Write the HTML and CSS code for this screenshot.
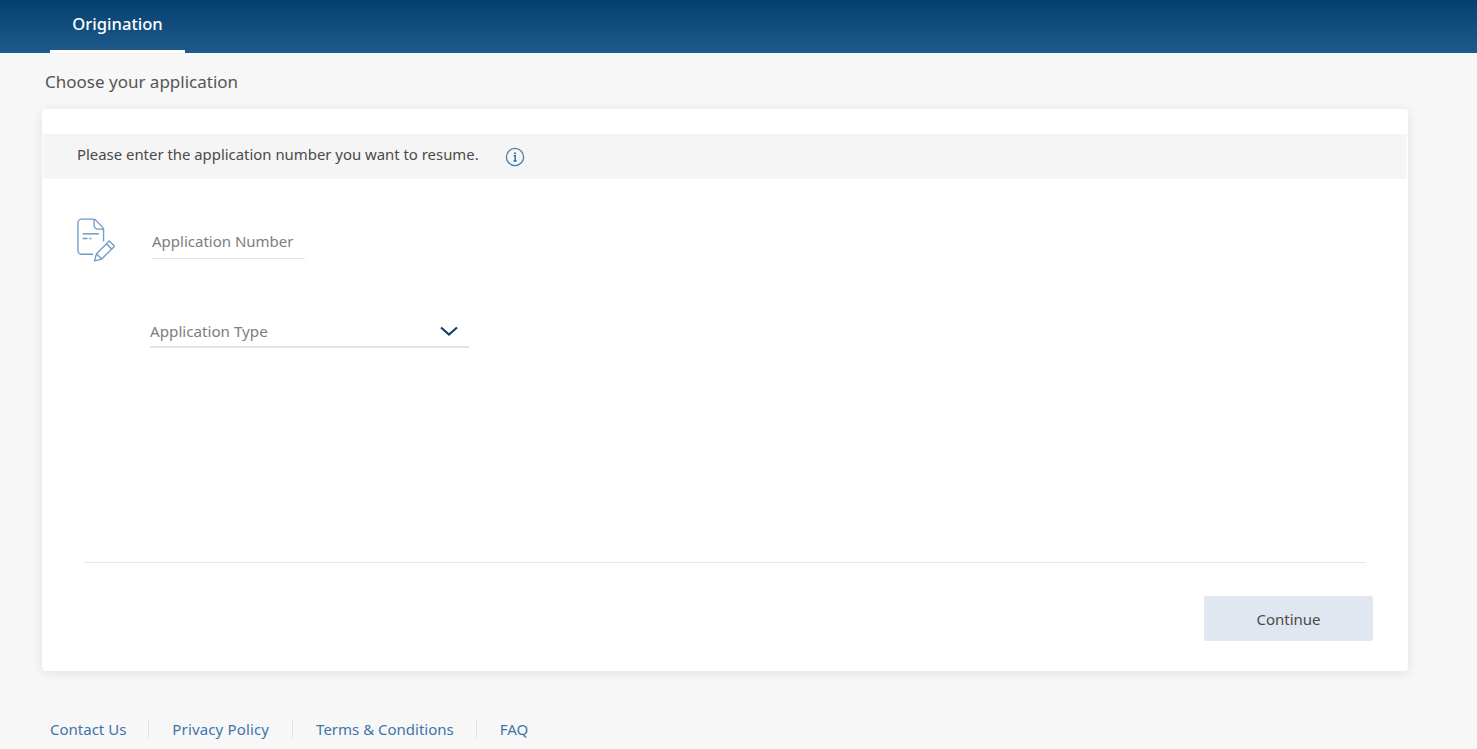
FILE: index.html
```html
<!DOCTYPE html>
<html lang="en">
<head>
<meta charset="utf-8">
<title>Origination</title>
<link rel="stylesheet" href="styles.css">
</head>
<body>
<header class="topbar">
  <a class="tab">Origination</a>
</header>
<main class="page">
  <h1 class="title">Choose your application</h1>
  <section class="card">
    <div class="banner">
      <span class="banner-text">Please enter the application number you want to resume.</span>
      <svg class="info" width="20" height="20" viewBox="0 0 20 20" fill="none" stroke="#4a7fb0">
        <circle cx="10" cy="10" r="8.6" stroke-width="1.3"/>
        <circle cx="10" cy="6.2" r="1" fill="#2f6699" stroke="none"/>
        <path d="M8.8 8.8h1.4v5M8.6 14h3" stroke="#2f6699" stroke-width="1.4"/>
      </svg>
    </div>
    <div class="form">
      <div class="row-number">
        <svg class="doc" width="38" height="45" viewBox="0 0 40 47" fill="none" stroke="#6c9cc8" stroke-width="1.4">
          <path d="M17 1H5a4 4 0 0 0-4 4v29a4 4 0 0 0 4 4h12"/>
          <path d="M17 1c1 0 2 .4 3 1.300l7 7.400c.8.800 1 1.600 1 2.300v12.500"/>
          <path d="M18 1.500v6a4 4 0 0 0 4 4h6"/>
          <path d="M6 16.500h17" stroke-width="1.600"/>
          <path d="M6 21.500h5M13 21.500h2" stroke-width="1.600"/>
          <path d="M18.500 45l2-7.500L34 24l5.500 5.500L26 43z" stroke-linejoin="round"/>
          <path d="M31 27l5.500 5.500M20.500 37.500l5.500 5.500"/>
        </svg>
        <div class="field-number">Application Number</div>
      </div>
      <div class="field-type">
        <span>Application Type</span>
        <svg width="20" height="10" viewBox="0 0 20 10" fill="none" stroke="#0d4273" stroke-width="2.200">
          <path d="M2 1.500L10 8.500l8-7"/>
        </svg>
      </div>
    </div>
    <div class="actions">
      <button class="continue" type="button">Continue</button>
    </div>
  </section>
  <footer class="footer">
    <a>Contact Us</a>
    <a class="policy">Privacy Policy</a>
    <a>Terms &amp; Conditions</a>
    <a>FAQ</a>
  </footer>
</main>
</body>
</html>
```

FILE: styles.css
```css
* { box-sizing: border-box; }
html, body { height: 100%; }
body {
  margin: 0;
  background: #f7f7f7;
  font-family: "Noto Sans", "Open Sans", sans-serif;
  color: #4a4a4a;
  overflow: hidden;
}
.topbar {
  height: 53px;
  padding-left: 50px;
  display: flex;
  background: linear-gradient(180deg, #03406f 0%, #205a8c 100%);
}
.tab {
  width: 135px;
  height: 53px;
  padding-top: 13px;
  text-align: center;
  color: #fff;
  font-size: 16.600px;
  line-height: 22px;
  font-weight: 500;
  border-bottom: 3px solid #fff;
}
.page { padding-left: 42px; }
.title {
  margin: 0;
  padding: 17px 0 0 3px;
  height: 56px;
  font-size: 17px;
  line-height: 24px;
  font-weight: 400;
  color: #555;
}
.card {
  width: 1366px;
  height: 562px;
  background: #fff;
  border-radius: 4px;
  box-shadow: 0 2px 12px rgba(0, 0, 0, .09);
  padding: 25px 1px 0;
  display: flex;
  flex-direction: column;
}
.banner {
  height: 45px;
  background: #f5f5f5;
  padding-left: 34px;
  display: flex;
  align-items: center;
}
.banner-text {
  width: 428px;
  font-size: 14.900px;
  line-height: 20px;
  margin-top: -5px;
  color: #4a4a4a;
  white-space: nowrap;
}
.info { margin-top: 1px; }
.form {
  flex: 1;
  padding: 38px 0 0 34px;
}
.row-number {
  display: flex;
  height: 80px;
}
.doc { margin-top: 1px; }
.field-number {
  width: 153px;
  height: 39px;
  margin: 3px 0 0 37px;
  padding-top: 11px;
  border-bottom: 1px solid #e4e4e4;
  font-size: 15px;
  line-height: 20px;
  color: #7d7d7d;
  white-space: nowrap;
}
.field-type {
  width: 319px;
  height: 42px;
  margin: 9px 0 0 73px;
  padding: 15px 10px 0 0;
  border-bottom: 2px solid #e2e2e2;
  display: flex;
  justify-content: space-between;
  font-size: 15.200px;
  line-height: 20px;
  color: #7d7d7d;
}
.field-type svg { margin-top: 5px; }
.actions {
  height: 109px;
  margin: 0 41px;
  border-top: 1px solid #e6e6e6;
  padding-top: 33px;
  display: flex;
  justify-content: flex-end;
}
.continue {
  width: 169px;
  height: 45px;
  margin-right: -7px;
  border: 0;
  border-radius: 2px;
  background: #e1e7f0;
  color: #4a4a4a;
  font-family: inherit;
  font-size: 15px;
  padding: 0;
}
.footer {
  display: flex;
  margin-top: 48px;
  padding-left: 8px;
  font-size: 15px;
  line-height: 20px;
  color: #3f75a8;
}
.footer a {
  padding-right: 22px;
  margin-right: 23px;
  border-right: 1px solid #e2e2e2;
  white-space: nowrap;
}
.footer .policy {
  letter-spacing: .15px;
  padding-right: 23px;
}
.footer a:last-child { border-right: 0; }
```
